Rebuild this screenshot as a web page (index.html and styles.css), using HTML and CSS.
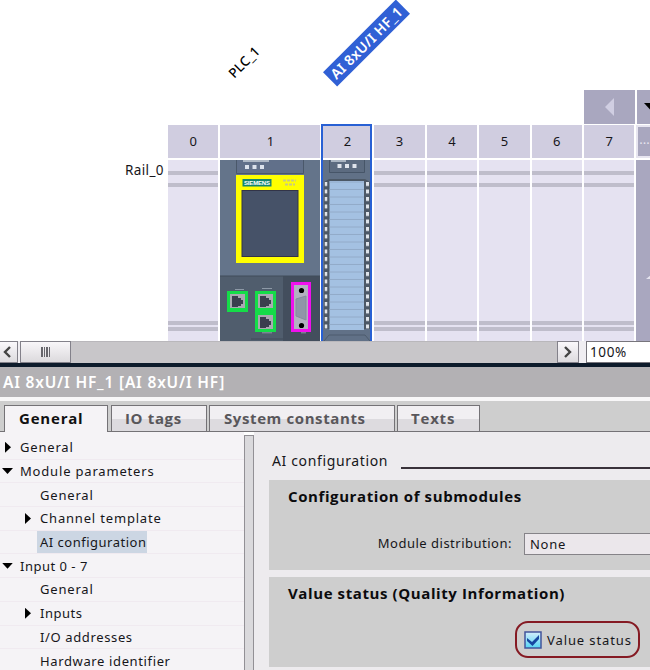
FILE: index.html
```html
<!DOCTYPE html>
<html lang="en">
<head>
<meta charset="utf-8">
<title>Device configuration</title>
<link rel="stylesheet" href="styles.css">
</head>
<body>
<main class="app">
  <section class="device-view">
    <span class="tag tag-plc">PLC_1</span>
    <span class="tag tag-ai">AI 8xU/I HF_1</span>
    <div class="pager">
      <div class="pager-cell"><svg width="51" height="34"><path d="M21 17L30 8V26Z" fill="#d0cee2"/></svg></div>
      <div class="pager-cell"><svg width="14" height="34"><path d="M7 13H20L13.5 20Z" fill="#000"/></svg></div>
    </div>
    <div class="rack">
      <div class="rail-name">Rail_0</div>
      <div class="slot"><div class="slot-head">0</div><div class="slot-body"></div></div>
      <div class="slot wide"><div class="slot-head">1</div><div class="slot-body">
        <svg class="module" width="100" height="181" viewBox="0 0 100 181">
          <rect width="100" height="181" fill="#64748a"/>
          <path d="M0 116H100V181H0Z" fill="#505d6d"/>
          <path d="M63 116H100V181H63Z" fill="#434e5d"/>
          <path d="M0 116H100M31 179H63" stroke="#414c5a"/>
          <path d="M16.5 0V13.500H83.500V0" fill="#61708a" stroke="#4a586a"/>
          <path d="M23 1H49" stroke="#aeb8c5" stroke-width="2"/>
          <path d="M25 5h4v4h-4zM32.500 5h4v4h-4zM40 5h4v4h-4z" fill="#dce2ec"/>
          <rect x="16" y="15" width="68" height="88" fill="#ff0"/>
          <rect x="22.500" y="19" width="29" height="7.500" fill="#14856f"/>
          <text x="24" y="25" font-family="Liberation Sans" font-size="6" font-weight="bold" fill="#fff" textLength="26">SIEMENS</text>
          <path d="M63 20.500H76M65 24.500H75" stroke="#c8c884" stroke-width="2" stroke-dasharray="3 1"/>
          <rect x="22" y="30.500" width="56" height="66" fill="#465268" stroke="#323448"/>
          <path d="M15 129.500h9M42 128.500h10M42 172.800h10M81 172.800h5" stroke="#8d99a6"/>
          <rect x="7" y="131" width="21" height="21" fill="#15dc48"/>
          <rect x="35" y="131" width="21" height="41" fill="#15dc48"/>
          <g fill="#aaa9b1"><path d="M10 134h15v14h-15zM38 134h15v14h-15zM38 155h15v14h-15z"/></g>
          <g fill="#3b3e4e"><path d="M12 136h6v2h3v2h2v4h-2v2h-3v1h-6zM40 136h6v2h3v2h2v4h-2v2h-3v1h-6zM40 157h6v2h3v2h2v4h-2v2h-3v1h-6z"/></g>
          <rect x="72.500" y="123.500" width="17" height="47" fill="#b2b2c0" stroke="#f010ed" stroke-width="3"/>
          <path d="M76 139L86 136V160L76 156Z" fill="#9096a8" stroke="#858b9d"/>
          <circle cx="81.500" cy="130.500" r="2.600"/><circle cx="81.500" cy="165.500" r="2.600"/>
        </svg></div></div>
      <div class="slot selected"><div class="slot-head">2</div><div class="slot-body">
        <svg class="module" width="50" height="181" viewBox="0 0 50 181">
          <defs>
            <pattern id="lines" width="10" height="7.500" patternUnits="userSpaceOnUse"><path d="M0 7H10" stroke="#91aac8" stroke-width="1"/></pattern>
            <pattern id="pins" width="4" height="7.500" patternUnits="userSpaceOnUse" y="22"><rect x="0" y="0" width="3" height="4" fill="#dfe4ea"/></pattern>
          </defs>
          <rect width="50" height="181" fill="#617187"/>
          <path d="M7.500 0V12.500H42.500V0" fill="#5c6b80" stroke="#465568"/>
          <path d="M9 1H24" stroke="#aab5c2" stroke-width="2"/>
          <path d="M15.500 4h4v4h-4zM23 4h4v4h-4zM30.500 4h4v4h-4z" fill="#dfe4ec"/>
          <path d="M2 22L7 19H43L48 22V169H2Z" fill="#4c5866"/>
          <rect x="7.500" y="21" width="34.500" height="149" fill="#a4c1e2"/>
          <rect x="7.500" y="21" width="34.500" height="149" fill="url(#lines)"/>
          <g transform="translate(2.500 0)"><rect y="22" width="3" height="147" fill="url(#pins)"/></g>
          <g transform="translate(44 0)"><rect y="22" width="3" height="147" fill="url(#pins)"/></g>
          <path d="M2 181L7 175H43L48 181" fill="none" stroke="#4e5c6e"/>
        </svg></div></div>
      <div class="slot"><div class="slot-head">3</div><div class="slot-body"></div></div>
      <div class="slot"><div class="slot-head">4</div><div class="slot-body"></div></div>
      <div class="slot"><div class="slot-head">5</div><div class="slot-body"></div></div>
      <div class="slot"><div class="slot-head">6</div><div class="slot-body"></div></div>
      <div class="slot"><div class="slot-head">7</div><div class="slot-body"></div></div>
      <div class="slot more"><div class="slot-head">...</div><div class="slot-body"><svg width="14" height="181"><path d="M10 119L15 115V119Z" fill="#e5e4ef"/></svg></div></div>
    </div>
  </section>
  <div class="scroll-row">
    <div class="scroll-btn left"><svg width="17" height="20"><path d="M10 5L5 10L10 15" fill="none" stroke="#444" stroke-width="2.400"/></svg></div>
    <div class="thumb"><i></i><i></i><i></i><i></i></div>
    <div class="track"></div>
    <div class="scroll-btn right"><svg width="20" height="20"><path d="M7 5L12 10L7 15" fill="none" stroke="#444" stroke-width="2.400"/></svg></div>
    <div class="zoom">100%</div>
  </div>
  <h1 class="title"><span>AI 8xU/I HF_1 [AI 8xU/I HF]</span></h1>
  <nav class="tabs">
    <div class="tab active t1"><span>General</span></div>
    <div class="tab t2"><span>IO tags</span></div>
    <div class="tab t3"><span>System constants</span></div>
    <div class="tab t4"><span>Texts</span></div>
  </nav>
  <section class="inspector">
    <div class="tree">
      <div class="row closed"><span>General</span></div>
      <div class="row open"><span>Module parameters</span></div>
      <div class="row child"><span>General</span></div>
      <div class="row child closed"><span>Channel template</span></div>
      <div class="row child current"><span>AI configuration</span></div>
      <div class="row open"><span class="tight">Input 0 - 7</span></div>
      <div class="row child"><span>General</span></div>
      <div class="row child closed"><span class="tight">Inputs</span></div>
      <div class="row child"><span class="mid">I/O addresses</span></div>
      <div class="row child"><span class="mid">Hardware identifier</span></div>
    </div>
    <div class="splitter"></div>
    <div class="content">
      <div class="heading"><span>AI configuration</span><hr></div>
      <div class="panel">
        <h2>Configuration of submodules</h2>
        <div class="field"><label>Module distribution:</label><div class="input">None</div></div>
      </div>
      <div class="panel second">
        <h2>Value status (Quality Information)</h2>
        <div class="check">
          <svg width="18" height="18" viewBox="0 0 18 18"><defs><linearGradient id="cb" x2="0" y2="1"><stop stop-color="#d3edfb"/><stop offset="1" stop-color="#55d5f4"/></linearGradient></defs><rect x="1" y="1" width="16" height="16" fill="url(#cb)" stroke="#43549b" stroke-width="1.500"/><path d="M3 7L8 11L15 4V8L8.500 15L3 10Z" fill="#1647a0"/></svg>
          <span>Value status</span>
        </div>
      </div>
    </div>
  </section>
</main>
</body>
</html>
```
FILE: styles.css
```css
* { box-sizing: border-box; }
body { margin: 0; background: #fff; color: #16161a; font-family: "Noto Sans", "Open Sans", sans-serif; font-size: 13px; }
.app { width: 650px; height: 670px; overflow: hidden; display: flex; flex-direction: column; }
.app span, .app label { white-space: nowrap; }

.device-view { position: relative; height: 341px; padding-top: 90px; overflow: hidden; }
.tag { position: absolute; display: flex; align-items: center; justify-content: center; height: 20px; line-height: 20px; }
.tag-plc { left: 219px; top: 52px; width: 50px; transform: rotate(-45deg); font-size: 13.500px; font-weight: 500; letter-spacing: .1px; color: #000; }
.tag-ai { left: 315px; top: 33px; width: 103px; transform: rotate(-45deg); background: #3060d5; color: #fff; font-weight: 600; font-size: 14px; letter-spacing: .3px; }
.pager { display: flex; gap: 2px; margin-left: 584px; height: 35px; }
.pager-cell { height: 34px; background: #a9a7bf; flex: none; }
.rack { display: flex; gap: 2px; height: 216px; width: 670px; }
.rail-name { width: 166px; padding: 36px 2px 0 0; text-align: right; line-height: 18px; font-size: 13.500px; letter-spacing: .4px; flex: none; }
.slot { width: 50.400px; flex: none; display: flex; flex-direction: column; gap: 2px; }
.slot.wide { width: 100px; }
.slot-head { height: 33px; line-height: 33px; text-align: center; background: #d0cde0; flex: none; }
.slot-body { height: 181px; background: linear-gradient(#e5e2f1 11px, #bfbdcb 11px, #bfbdcb 15px, #e5e2f1 15px, #e5e2f1 23.500px, #bfbdcb 23.500px, #bfbdcb 27px, #e5e2f1 27px, #e5e2f1 161.500px, #bfbdcb 161.500px, #bfbdcb 165px, #e5e2f1 165px, #e5e2f1 167.500px, #bfbdcb 167.500px, #bfbdcb 171px, #e5e2f1 171px); }
.module { display: block; }
.slot.selected { position: relative; width: 50px; }
.slot.selected::after { content: ""; position: absolute; left: -1px; top: -1px; right: 0; bottom: -3px; border: 2px solid #2860d4; }
.slot.more .slot-head { background: #a9a7bf; border: 2px solid #e7e5f0; color: #e7e5f0; text-align: left; padding-left: 1px; line-height: 25px; }
.slot.more .slot-body { background: #a9a7bf; }

.scroll-row { display: flex; height: 26px; border-bottom: 4px solid #0d1b2b; background: #f0eef2; flex: none; }
.scroll-row > * { flex: none; }
.scroll-btn { height: 22px; border: 1px solid #83818a; background: linear-gradient(#faf8fb, #dddbdf); }
.scroll-btn.left { width: 18px; border-left: 0; }
.scroll-btn.right { width: 22px; }
.scroll-btn svg { display: block; }
.thumb { width: 51px; height: 22px; margin-left: 2px; border: 1px solid #83818a; background: linear-gradient(#f8f6f9, #dcdadd); display: flex; gap: 1px; justify-content: center; align-items: center; }
.thumb i { width: 1.500px; height: 10px; background: #66656b; }
.track { width: 486px; background: #c8c6c9; border-top: 1px solid #b9b7bb; }
.zoom { margin-left: 7px; width: 70px; height: 22px; line-height: 21px; padding-left: 3px; background: #fff; border: 1px solid #77757c; font-size: 13.500px; letter-spacing: .6px; }

.title { margin: 0; flex: none; height: 34px; padding-left: 3px; background: #b3b1b4; border-bottom: 4px solid #f8f7f8; color: #fff; font-size: 15.500px; line-height: 31px; font-weight: 600; letter-spacing: .8px; }
.tabs { flex: none; display: flex; height: 31px; padding: 4px 0 0 4px; background: #cecece; border-bottom: 1px solid #747276; }
.tab { height: 26px; border: 1px solid #747276; border-bottom: 0; background: linear-gradient(#f1eff2 50%, #dddbdf 52%, #dddbdf); font-weight: 700; font-size: 15px; line-height: 25px; color: #59575b; }
.tab.active { height: 28px; color: #111; background: #f5f3f6; }
.t1 { width: 104px; padding-left: 14px; letter-spacing: .8px; }
.t2 { width: 96px; margin-left: 3px; padding-left: 13px; letter-spacing: .65px; }
.t3 { width: 186px; margin-left: 2px; padding-left: 14px; letter-spacing: .6px; }
.t4 { width: 83px; margin-left: 2px; padding-left: 13px; letter-spacing: .8px; }
.tab span { display: inline-block; font-family: "Open Sans", "Noto Sans", sans-serif; }

.inspector { display: flex; height: 238px; flex: none; }
.tree { width: 244px; padding-top: 4px; background: #f5f3f6; flex: none; }
.row { height: 23.700px; display: flex; align-items: center; padding-left: 20px; border-bottom: 1px solid #f0eaf0; letter-spacing: .82px; }
.row.child { padding-left: 40px; }
.row .tight { letter-spacing: .5px; }
.row .mid { letter-spacing: .63px; }
.row.closed::before { content: ""; flex: none; width: 15px; height: 11px; margin-left: -15px; background: #000; clip-path: polygon(0 0, 6px 50%, 0 100%); }
.row.open::before { content: ""; flex: none; width: 18px; height: 6px; margin-left: -18px; background: #000; clip-path: polygon(0 0, 11px 0, 5.500px 100%); }
.row.current span { margin-left: -3px; padding: 0 1px 0 3px; height: 22px; line-height: 22px; background: #ccd6e3; letter-spacing: .5px; }
.splitter { width: 10px; margin-top: 3px; background: #dad9dc; border: 1px solid #929095; border-bottom: 0; flex: none; }
.content { width: 396px; padding-left: 15px; background: #edebee; flex: none; }
.heading { height: 48px; padding: 19px 0 0 3px; display: flex; line-height: 20px; font-size: 14px; letter-spacing: .63px; }
.heading span { width: 129px; }
.heading hr { flex: 1; height: 2px; border: 0; background: #39323a; margin: 16px 0 0; }
.panel { height: 90px; background: #cecece; overflow: hidden; }
.panel.second { margin-top: 7px; }
.panel h2 { margin: 6px 0 0 19px; font-family: "Open Sans", "Noto Sans", sans-serif; font-size: 15px; line-height: 20px; font-weight: 700; letter-spacing: .6px; white-space: nowrap; color: #0b0b0d; }
.field { display: flex; margin-top: 27px; line-height: 21px; }
.field > * { flex: none; }
.field label { width: 243px; text-align: right; letter-spacing: .5px; }
.input { margin-left: 12px; width: 140px; height: 22px; line-height: 20px; border: 1px solid #858388; background: #ebe7eb; padding-left: 5px; letter-spacing: .7px; }
.check { display: flex; align-items: center; width: 125px; height: 37px; margin: 18px 0 0 246px; padding-left: 7px; border: 2px solid #851a23; border-radius: 13px; }
.check span { margin-left: 5px; letter-spacing: .9px; }
```
